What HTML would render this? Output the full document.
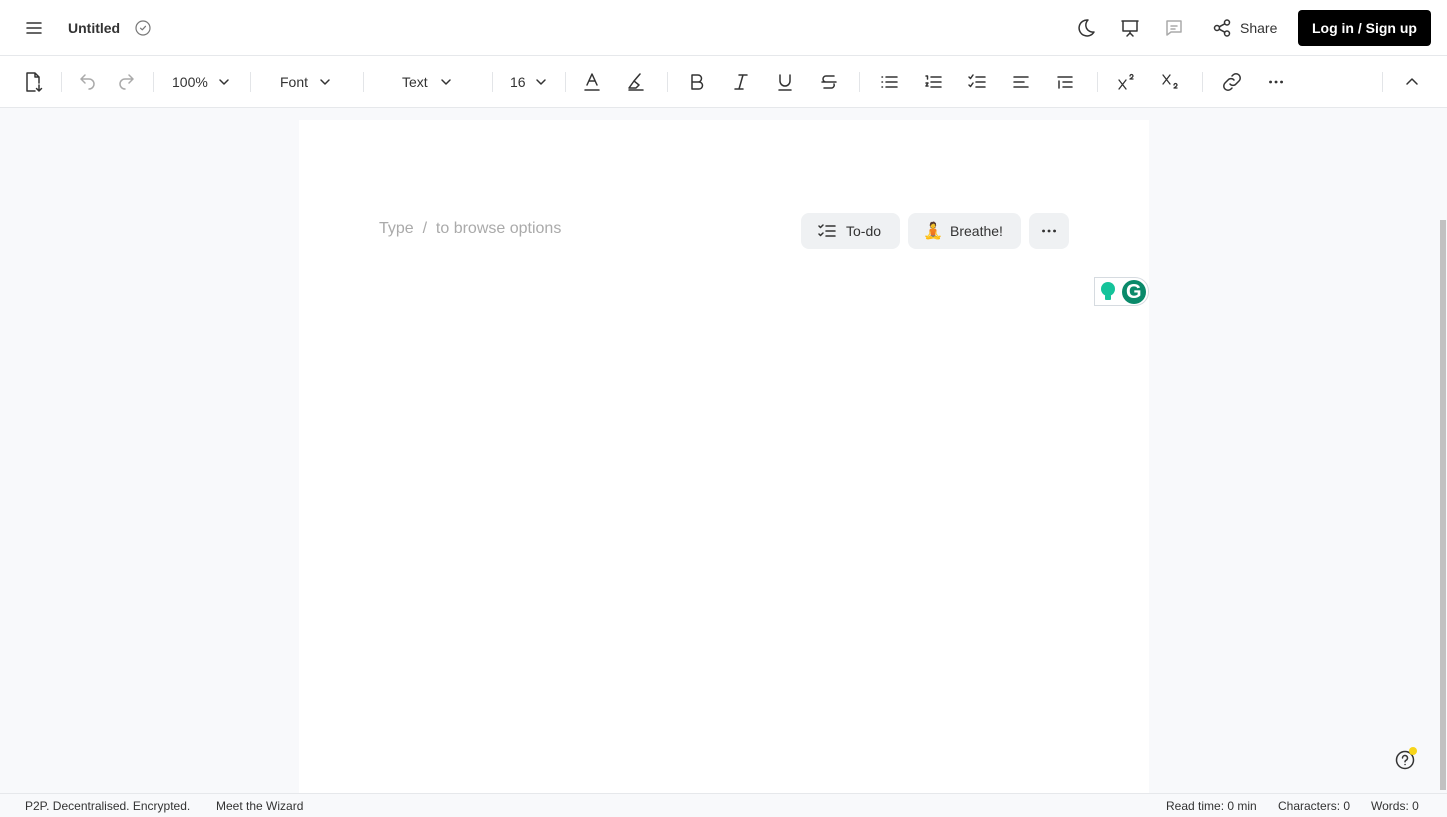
<!DOCTYPE html>
<html><head><meta charset="utf-8"><style>
*{box-sizing:border-box;margin:0;padding:0}
body{width:1447px;height:817px;overflow:hidden;background:#f8f9fb;font-family:"Liberation Sans",sans-serif;color:#222;position:relative}
.top{position:absolute;left:0;top:0;width:1447px;height:56px;background:#fff;border-bottom:1px solid #e6e8eb}
.tb{position:absolute;left:0;top:56px;width:1447px;height:52px;background:#fff;border-bottom:1px solid #e6e8eb}
.abs{position:absolute}
svg{position:absolute;fill:none;stroke:#333;stroke-width:1.5;stroke-linecap:round;stroke-linejoin:round}
.sep{position:absolute;top:16px;width:1px;height:20px;background:#e3e5e8}
.t{position:absolute;font-size:14px;color:#333}
.editor{position:absolute;left:299px;top:120px;width:850px;height:673px;background:#fff}
.btn{position:absolute;top:213px;height:36px;background:#eff1f3;border-radius:8px;font-size:14px;color:#333}
.status{position:absolute;left:0;top:793px;width:1447px;height:24px;background:#f8f9fb;border-top:1px solid #e6e8eb;font-size:12px;color:#333}
</style></head><body>
<div class="top">
<svg style="left:25px;top:19px" width="18" height="18" viewBox="0 0 18 18"><path d="M2 4h14M2 9h14M2 14h14"/></svg>
<div class="t" style="left:68px;top:20px;font-weight:bold;color:#333">Untitled</div>
<svg style="left:135px;top:20px;stroke:#777;stroke-width:1.2" width="16" height="16" viewBox="0 0 16 16"><circle cx="8" cy="8" r="7"/><path d="M5.5 8.2l1.8 1.6 3.2-3.5"/></svg>
<svg style="left:1075px;top:17px" width="22" height="22" viewBox="0 0 22 22"><path d="M13 3a8 8 0 1 0 6 12a7 7 0 0 1-6-12z"/></svg>
<svg style="left:1119px;top:17px" width="22" height="22" viewBox="0 0 22 22"><path d="M3 4h16M4 4v10h14V4M11 14v2M8 19l3-3 3 3"/></svg>
<svg style="left:1164px;top:18px;stroke:#aaa" width="20" height="20" viewBox="0 0 20 20"><path d="M3 3h14v11H7l-4 3z M7 8h6M7 11h4"/></svg>
<svg style="left:1212px;top:18px" width="20" height="20" viewBox="0 0 20 20"><circle cx="5" cy="10" r="2.5"/><circle cx="15" cy="4.5" r="2.5"/><circle cx="15" cy="15.5" r="2.5"/><path d="M7.2 8.8l5.6-3M7.2 11.2l5.6 3"/></svg>
<div class="t" style="left:1240px;top:20px">Share</div>
<div class="abs" style="left:1298px;top:10px;width:133px;height:36px;background:#000;border-radius:4px;color:#fff;font-size:14px;font-weight:bold;text-align:center;line-height:36px">Log in / Sign up</div>
</div>
<div class="tb">
<svg style="left:23px;top:15px" width="22" height="22" viewBox="0 0 22 22"><path d="M12 20H4V2h8l4 4v6M12 2v4h4M16 14v6M13.5 17.5l2.5 2.5 2.5-2.5"/></svg>
<div class="sep" style="left:61px"></div>
<svg style="left:77px;top:17px;stroke:#aaa" width="20" height="18" viewBox="0 0 20 18"><path d="M4 6h8a5 5 0 0 1 0 10M4 6l4-4M4 6l4 4"/></svg>
<svg style="left:117px;top:17px;stroke:#aaa" width="20" height="18" viewBox="0 0 20 18"><path d="M16 6H8a5 5 0 0 0 0 10M16 6l-4-4M16 6l-4 4"/></svg>
<div class="sep" style="left:153px"></div>
<div class="t" style="left:172px;top:18px">100%</div>
<svg style="left:218px;top:21px" width="12" height="10" viewBox="0 0 12 10"><path d="M2 3l4 4 4-4"/></svg>
<div class="sep" style="left:250px"></div>
<div class="t" style="left:280px;top:18px">Font</div>
<svg style="left:319px;top:21px" width="12" height="10" viewBox="0 0 12 10"><path d="M2 3l4 4 4-4"/></svg>
<div class="sep" style="left:363px"></div>
<div class="t" style="left:402px;top:18px">Text</div>
<svg style="left:440px;top:21px" width="12" height="10" viewBox="0 0 12 10"><path d="M2 3l4 4 4-4"/></svg>
<div class="sep" style="left:492px"></div>
<div class="t" style="left:510px;top:18px">16</div>
<svg style="left:535px;top:21px" width="12" height="10" viewBox="0 0 12 10"><path d="M2 3l4 4 4-4"/></svg>
<div class="sep" style="left:565px"></div>
<svg style="left:582px;top:15px" width="20" height="22" viewBox="0 0 20 22"><path d="M5 14L10 3l5 11M7 10h6M3 19h14"/></svg>
<svg style="left:626px;top:15px" width="20" height="22" viewBox="0 0 20 22"><path d="M3 17l5-7 5 4-3 3zM8 10l6-7M3 19h14"/></svg>
<div class="sep" style="left:667px"></div>
<svg style="left:687px;top:16px" width="20" height="20" viewBox="0 0 20 20"><path d="M5 3h6a3.5 3.5 0 0 1 0 7H5zM5 10h7a3.5 3.5 0 0 1 0 7H5z"/></svg>
<svg style="left:731px;top:16px" width="20" height="20" viewBox="0 0 20 20"><path d="M8 3h8M4 17h8M12 3l-4 14"/></svg>
<svg style="left:775px;top:16px" width="20" height="20" viewBox="0 0 20 20"><path d="M5 3v6a5 5 0 0 0 10 0V3M4 18h12"/></svg>
<svg style="left:819px;top:16px" width="20" height="20" viewBox="0 0 20 20"><path d="M15 4H7a3 3 0 0 0 0 6M3 10h14M5 16h8a3 3 0 0 0 2-4"/></svg>
<div class="sep" style="left:859px"></div>
<svg style="left:879px;top:16px" width="20" height="20" viewBox="0 0 20 20"><path d="M7 5h11M7 10h11M7 15h11M3 5h.5M3 10h.5M3 15h.5"/></svg>
<svg style="left:923px;top:16px" width="20" height="20" viewBox="0 0 20 20"><path d="M8 5h10M8 10h10M8 15h10M3 4h1.5v3M3 11h2l-2 3h2"/></svg>
<svg style="left:967px;top:16px" width="20" height="20" viewBox="0 0 20 20"><path d="M9 5h9M9 10h9M9 15h9M2 5l1.5 1.5L6 3M2 13l1.5 1.5L6 11"/></svg>
<svg style="left:1011px;top:16px" width="20" height="20" viewBox="0 0 20 20"><path d="M3 5h14M3 10h10M3 15h14"/></svg>
<svg style="left:1055px;top:16px" width="20" height="20" viewBox="0 0 20 20"><path d="M3 5h14M8 10h9M8 15h9M4 9v7"/></svg>
<div class="sep" style="left:1097px"></div>
<svg style="left:1116px;top:16px;stroke-width:1.3" width="22" height="20" viewBox="0 0 22 20"><path d="M3 8l7 9M10 8l-7 9M14 4a1.5 1.5 0 0 1 3 0c0 1-3 3-3 3h3"/></svg>
<svg style="left:1160px;top:16px;stroke-width:1.3" width="22" height="20" viewBox="0 0 22 20"><path d="M3 3l7 9M10 3l-7 9M14 13a1.5 1.5 0 0 1 3 0c0 1-3 3-3 3h3"/></svg>
<div class="sep" style="left:1202px"></div>
<svg style="left:1221px;top:15px" width="22" height="22" viewBox="0 0 22 22"><path d="M9 13a4 4 0 0 0 6 0l3-3a4 4 0 0 0-6-6l-1 1M13 9a4 4 0 0 0-6 0l-3 3a4 4 0 0 0 6 6l1-1"/></svg>
<svg style="left:1266px;top:16px;stroke-width:2.8" width="20" height="20" viewBox="0 0 20 20"><path d="M4.5 10h.1M10 10h.1M15.5 10h.1"/></svg>
<div class="sep" style="left:1382px"></div>
<svg style="left:1404px;top:18px" width="16" height="14" viewBox="0 0 16 14"><path d="M3 10l5-5 5 5"/></svg>
</div>
<div class="editor"></div>
<div class="abs" style="left:379px;top:220px;font-size:16px;color:#aaa">Type&nbsp;&nbsp;/&nbsp;&nbsp;to browse options</div>
<div class="btn" style="left:801px;width:99px">
<svg style="left:17px;top:10px" width="18" height="16" viewBox="0 0 18 16"><path d="M1 3l1.5 1.5L5 2M1 11l1.5 1.5L5 10M8 3h9M8 8h9M8 13h9"/></svg>
<span class="abs" style="left:45px;top:10px">To-do</span></div>
<div class="btn" style="left:908px;width:113px">
<span class="abs" style="left:15px;top:8px;font-size:16px;font-family:'Noto Color Emoji','DejaVu Sans',sans-serif">🧘</span>
<span class="abs" style="left:42px;top:10px">Breathe!</span></div>
<div class="btn" style="left:1029px;width:40px">
<svg style="left:10px;top:8px;stroke-width:2.8" width="20" height="20" viewBox="0 0 20 20"><path d="M4.5 10h.1M10 10h.1M15.5 10h.1"/></svg></div>
<div class="abs" style="left:1094px;top:277px;width:55px;height:29px;background:#fff;border:1px solid #d6dbe0;border-radius:0 14px 14px 0"></div>
<div class="abs" style="left:1101px;top:282px;width:14px;height:14px;border-radius:50%;background:#15c39a"></div>
<div class="abs" style="left:1105px;top:295px;width:6px;height:5px;background:#15c39a;border-radius:1px"></div>
<div class="abs" style="left:1122px;top:280px;width:24px;height:24px;border-radius:50%;background:#0a8a6a"></div>
<div class="abs" style="left:1126px;top:280px;font-size:20px;font-weight:bold;color:#fff;line-height:24px">G</div>
<svg style="left:1394px;top:749px" width="22" height="22" viewBox="0 0 22 22"><circle cx="11" cy="11" r="8.5"/><path d="M8.5 9a2.5 2.5 0 1 1 3.5 2.3c-.6.3-1 .8-1 1.5M11 15.5h.1"/></svg>
<div class="abs" style="left:1409px;top:747px;width:8px;height:8px;border-radius:50%;background:#f7d51a"></div>
<div class="abs" style="left:1440px;top:220px;width:6px;height:570px;background:#c1c1c1"></div>
<div class="status">
<span class="abs" style="left:25px;top:5px">P2P. Decentralised. Encrypted.</span>
<span class="abs" style="left:216px;top:5px">Meet the Wizard</span>
<span class="abs" style="left:1166px;top:5px">Read time: 0 min</span>
<span class="abs" style="left:1278px;top:5px">Characters: 0</span>
<span class="abs" style="left:1371px;top:5px">Words: 0</span>
</div>
</body></html>
